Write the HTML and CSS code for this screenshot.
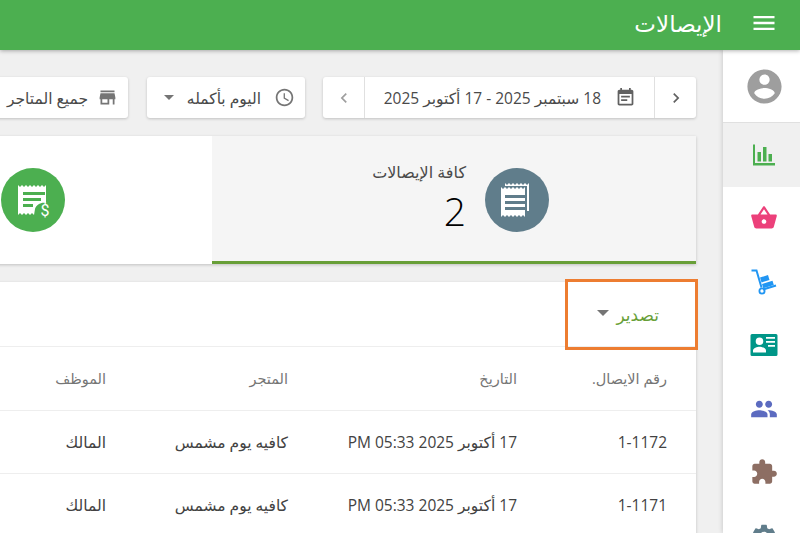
FILE: index.html
```html
<!DOCTYPE html>
<html lang="ar" dir="rtl">
<head>
<meta charset="utf-8">
<title>الإيصالات</title>
<link rel="stylesheet" href="styles.css">
</head>
<body>
<header class="topbar">
  <button class="menu-btn" aria-label="menu"><svg class="ic28" viewBox="0 0 24 24"><path d="M3 18h18v-2H3v2zm0-5h18v-2H3v2zm0-7v2h18V6H3z"/></svg></button>
  <h1 class="title">الإيصالات</h1>
</header>
<div class="shell">
  <aside class="sidebar">
    <div class="side-item side-user"><svg class="avatar" viewBox="0 0 24 24"><path d="M12 2C6.48 2 2 6.48 2 12s4.48 10 10 10 10-4.48 10-10S17.52 2 12 2zm0 3c1.66 0 3 1.34 3 3s-1.34 3-3 3-3-1.34-3-3 1.34-3 3-3zm0 14.2c-2.5 0-4.71-1.28-6-3.22.03-1.99 4-3.08 6-3.08 1.99 0 5.97 1.09 6 3.08-1.29 1.94-3.5 3.22-6 3.22z"/></svg></div>
    <div class="side-item active"><svg class="ic24 c-green" viewBox="0 0 24 24"><path d="M1 1.500h2V20h20v2.500H1zM5.500 9H9v9.500H5.500zM11 4h3.500v14.500H11zM16.500 11H20v7.500h-3.500z"/></svg></div>
    <div class="side-item"><svg class="ic28 c-pink" viewBox="0 0 24 24"><path d="M17.210 9l-4.380-6.560c-.19-.28-.51-.42-.83-.42-.32 0-.64.14-.83.43L6.790 9H2c-.55 0-1 .45-1 1 0 .09.01.18.04.27l2.540 9.270c.23.84 1 1.460 1.920 1.460h13c.92 0 1.690-.62 1.930-1.460l2.540-9.270L23 10c0-.55-.45-1-1-1h-4.790zM9 9l3-4.400L15 9H9zm3 8c-1.100 0-2-.9-2-2s.9-2 2-2 2 .9 2 2-.9 2-2 2z"/></svg></div>
    <div class="side-item"><svg class="ic28 c-blue" viewBox="0 0 28 28"><path d="M1.500 2.500H6.500L11.500 19.500" fill="none" stroke="currentColor" stroke-width="2"/><path d="M13 21.500L26 17.500" fill="none" stroke="currentColor" stroke-width="2"/><circle cx="12" cy="23" r="2.600" fill="none" stroke="currentColor" stroke-width="1.800"/><path d="M10 9.500l8-2.500 1.500 5-8 2.500zM12 16l10.500-3.200 1.300 4.200-10.500 3.200z"/></svg></div>
    <div class="side-item"><svg class="ic28 c-teal" viewBox="0 0 28 24"><path fill-rule="evenodd" d="M2 1h24a1.500 1.500 0 0 1 1.500 1.500v19A1.500 1.500 0 0 1 26 23H2A1.500 1.500 0 0 1 .5 21.500v-19A1.500 1.500 0 0 1 2 1zM9.500 4.500a3.800 3.800 0 1 0 0 7.600 3.800 3.800 0 0 0 0-7.600zM3 19.500h13v-2c0-2.500-4.300-3.800-6.500-3.800S3 15 3 17.500zM16 4v1.800h9V4zM16 8v1.800h9V8zM18 12v1.800h7V12z"/></svg></div>
    <div class="side-item"><svg class="ic28 c-indigo" viewBox="0 0 24 24"><path d="M16 11c1.660 0 2.990-1.340 2.990-3S17.660 5 16 5c-1.660 0-3 1.340-3 3s1.340 3 3 3zm-8 0c1.660 0 2.990-1.340 2.990-3S9.660 5 8 5C6.340 5 5 6.340 5 8s1.340 3 3 3zm0 2c-2.330 0-7 1.170-7 3.500V19h14v-2.500c0-2.330-4.670-3.500-7-3.500zm8 0c-.29 0-.62.02-.97.05 1.160.84 1.970 1.970 1.970 3.450V19h6v-2.500c0-2.330-4.670-3.500-7-3.500z"/></svg></div>
    <div class="side-item"><svg class="ic28 c-brown" viewBox="0 0 24 24"><path d="M20.500 11H19V7c0-1.100-.9-2-2-2h-4V3.500C13 2.120 11.880 1 10.500 1S8 2.120 8 3.500V5H4c-1.100 0-1.990.9-1.990 2v3.800H3.500c1.490 0 2.700 1.210 2.700 2.700s-1.210 2.700-2.700 2.700H2V20c0 1.100.9 2 2 2h3.800v-1.500c0-1.490 1.210-2.700 2.700-2.700 1.490 0 2.700 1.210 2.700 2.700V22H17c1.100 0 2-.9 2-2v-4h1.500c1.380 0 2.500-1.120 2.500-2.500S21.880 11 20.500 11z"/></svg></div>
    <div class="side-item"><svg class="ic28 c-slate" viewBox="0 0 24 24"><path d="M19.140 12.940c.04-.3.06-.61.06-.94 0-.32-.02-.64-.07-.94l2.030-1.580c.18-.14.23-.41.12-.61l-1.920-3.320c-.12-.22-.37-.29-.59-.22l-2.390.96c-.5-.38-1.030-.7-1.620-.94l-.36-2.540c-.04-.24-.24-.41-.48-.41h-3.840c-.24 0-.43.17-.47.41l-.36 2.540c-.59.24-1.130.57-1.620.94l-2.390-.96c-.22-.08-.47 0-.59.22L2.740 8.870c-.12.21-.08.47.12.61l2.030 1.580c-.05.3-.09.63-.09.94s.02.64.07.94l-2.030 1.580c-.18.14-.23.41-.12.61l1.920 3.320c.12.22.37.29.59.22l2.390-.96c.5.38 1.030.7 1.620.94l.36 2.540c.05.24.24.41.48.41h3.840c.24 0 .44-.17.47-.41l.36-2.540c.59-.24 1.130-.56 1.620-.94l2.390.96c.22.08.47 0 .59-.22l1.920-3.320c.12-.22.07-.47-.12-.61l-2.010-1.580zM12 15.600c-1.980 0-3.600-1.620-3.600-3.600s1.620-3.600 3.600-3.600 3.600 1.620 3.600 3.600-1.620 3.600-3.600 3.600z"/></svg></div>
  </aside>
  <main class="content">
    <div class="toolbar">
      <div class="control date-range">
        <button class="nav-btn"><svg class="ic20 c-dark" viewBox="0 0 24 24"><path d="M8.590 16.590L10 18l6-6-6-6-1.410 1.410L13.170 12z"/></svg></button>
        <div class="date-label"><svg class="ic21 c-dark" viewBox="0 0 24 24"><path d="M17 10H7v2h10v-2zm2-7h-1V1h-2v2H8V1H6v2H5c-1.110 0-1.990.9-1.990 2L3 19c0 1.100.89 2 2 2h14c1.100 0 2-.9 2-2V5c0-1.100-.9-2-2-2zm0 16H5V8h14v11zm-5-5H7v2h7v-2z"/></svg><span>18 سبتمبر 2025 - 17 أكتوبر 2025</span></div>
        <button class="nav-btn"><svg class="ic20 c-light" viewBox="0 0 24 24"><path d="M15.410 7.410L14 6l-6 6 6 6 1.410-1.410L10.830 12z"/></svg></button>
      </div>
      <div class="control picker picker-time">
        <svg class="ic21 c-mid" viewBox="0 0 24 24"><path d="M11.990 2C6.470 2 2 6.480 2 12s4.470 10 9.990 10C17.520 22 22 17.520 22 12S17.520 2 11.990 2zM12 20c-4.420 0-8-3.580-8-8s3.580-8 8-8 8 3.580 8 8-3.580 8-8 8zm.5-13H11v6l5.250 3.150.75-1.230-4.500-2.670z"/></svg>
        <span>اليوم بأكمله</span>
        <i class="caret"></i>
      </div>
      <div class="control picker picker-store">
        <svg class="ic21 c-mid" viewBox="0 0 24 24"><path d="M20 4H4v2h16V4zm1 10v-2l-1-5H4l-1 5v2h1v6h10v-6h4v6h2v-6h1zm-9 4H6v-4h6v4z"/></svg>
        <span>جميع المتاجر</span>
      </div>
    </div>

    <section class="stats">
      <div class="stat stat-active">
        <div class="stat-circle bg-slate">
          <svg class="ic-receipt" viewBox="0 0 40 40"><path fill-rule="evenodd" d="M4 7l2 2 2-2 2 2 2-2 2 2 2-2 2 2 2-2 2 2 2-2 2 2 2-2v30l-2-2-2 2-2-2-2 2-2-2-2 2-2-2-2 2-2-2-2 2-2-2-2 2zM8 15v3h20v-3zM8 21v3h20v-3zM8 27v3h20v-3z"/><path d="M8 3l2 2 2-2 2 2 2-2 2 2 2-2 2 2 2-2 2 2 2-2 2 2 2-2v28h-2V6H8z"/></svg>
        </div>
        <div class="stat-text"><div class="stat-label">كافة الإيصالات</div><div class="stat-value">2</div></div>
      </div>
      <div class="stat stat-idle">
        <div class="stat-circle bg-green">
          <svg class="ic-receipt" viewBox="0 0 40 40"><path fill-rule="evenodd" d="M5 5l2 2 2-2 2 2 2-2 2 2 2-2 2 2 2-2 2 2 2-2 2 2 2-2 2 2 2-2v18c-5-1-10 2-11 6l-1 6-2-2-2 2-2-2-2 2-2-2-2 2-2-2-2 2zM10 12v3h22v-3zM10 18v3h18v-3zM10 24v3h10v-3z"/><text x="32" y="36" class="dollar">$</text></svg>
        </div>
      </div>
    </section>

    <section class="table-card">
      <div class="table-top">
        <div class="export"><span class="export-text">تصدير</span><i class="caret"></i></div>
        <div class="highlight"></div>
      </div>
      <table class="receipts">
        <thead>
          <tr><th class="col-no">رقم الايصال.</th><th class="col-date">التاريخ</th><th class="col-store">المتجر</th><th class="col-staff">الموظف</th></tr>
        </thead>
        <tbody>
          <tr><td>1-1172</td><td>17 أكتوبر <bdi>2025</bdi> <bdi>05:33</bdi> <bdi>PM</bdi></td><td>كافيه يوم مشمس</td><td>المالك</td></tr>
          <tr><td>1-1171</td><td>17 أكتوبر <bdi>2025</bdi> <bdi>05:33</bdi> <bdi>PM</bdi></td><td>كافيه يوم مشمس</td><td>المالك</td></tr>
        </tbody>
      </table>
    </section>
  </main>
</div>
</body>
</html>
```
FILE: styles.css
```css
* { box-sizing: border-box; }
html, body { margin: 0; height: 100%; overflow: hidden; }
body {
  width: 800px;
  height: 533px;
  background: #f0f0f0;
  color: #333;
  font-family: "Open Sans", "DejaVu Sans", "Noto Sans", sans-serif;
  font-size: 15.5px;
  display: flex;
  flex-direction: column;
}
svg { display: block; fill: currentColor; flex: none; }
button { border: 0; background: none; padding: 0; font: inherit; }

.ic20 { width: 20px; height: 20px; }
.ic21 { width: 21px; height: 21px; }
.ic24 { width: 24px; height: 24px; }
.ic28 { width: 28px; height: 28px; }
.c-green { color: #4caf50; }
.c-pink { color: #ec407a; }
.c-blue { color: #2196f3; }
.c-teal { color: #009688; }
.c-indigo { color: #5c6bc0; }
.c-brown { color: #8d6e63; }
.c-slate { color: #607d8b; }
.c-dark { color: #616161; }
.c-mid { color: #757575; }
.c-light { color: #9e9e9e; }

.topbar {
  flex: none;
  height: 50px;
  background: #4caf50;
  color: #fff;
  display: flex;
  align-items: center;
  padding-right: 22px;
  gap: 28px;
  box-shadow: 0 1px 4px rgba(0,0,0,.3);
  position: relative;
  z-index: 3;
}
.menu-btn { color: #fff; width: 28px; height: 28px; margin-top: -5px; }
.title { margin: 0; font-size: 23px; font-weight: 400; line-height: 1; margin-top: -3px; }

.shell { flex: 1; min-height: 0; display: flex; }

.sidebar {
  flex: none;
  width: 77px;
  background: #fff;
  box-shadow: 0 0 5px rgba(0,0,0,.2);
  position: relative;
  z-index: 2;
}
.side-item { height: 63.5px; padding-right: 0; padding-left: 5px; display: flex; align-items: center; justify-content: center; }
.side-user { height: 73px; border-bottom: 1px solid #e0e0e0; }
.avatar { width: 41px; height: 41px; color: #9e9e9e; }
.active { background: #f0f0f0; }

.content { flex: 1; min-width: 0; overflow: hidden; padding: 27px 27px 0 0; }

.toolbar { display: flex; gap: 18px; height: 41px; }
.control {
  flex: none;
  height: 41px;
  background: #fff;
  border-radius: 3px;
  box-shadow: 0 1px 3px rgba(0,0,0,.2);
  display: flex;
  align-items: center;
  color: #4a4a4a;
}
.date-range { width: 373px; }
.nav-btn { width: 41px; height: 41px; display: flex; align-items: center; justify-content: center; }
.nav-btn:first-child { border-left: 1px solid #e0e0e0; width: 42px; }
.nav-btn:last-child { border-right: 1px solid #e0e0e0; width: 42px; }
.date-label { flex: 1; display: flex; align-items: center; gap: 14px; padding-right: 18px; white-space: nowrap; }
.picker { padding: 0 10px; gap: 13px; white-space: nowrap; }
.picker-time { width: 158px; }
.picker-store { width: 147px; margin-right: 1px; gap: 9px; }
.caret {
  display: inline-block;
  width: 0;
  height: 0;
  border-left: 5px solid transparent;
  border-right: 5px solid transparent;
  border-top: 5px solid #757575;
  flex: none;
}

.stats {
  margin-top: 18px;
  width: 760px;
  height: 128px;
  display: flex;
  background: #fff;
  box-shadow: 0 1px 3px rgba(0,0,0,.2);
}
.stat { height: 128px; display: flex; align-items: center; flex: none; }
.stat-active { width: 484px; background: #f5f5f5; border-bottom: 3px solid #689f38; padding: 3px 147px 0 0; gap: 19px; }
.stat-idle { width: 276px; padding-right: 147px; }
.stat-circle { width: 64px; height: 64px; border-radius: 50%; display: flex; align-items: center; justify-content: center; color: #fff; flex: none; }
.bg-slate { background: #607d8b; }
.bg-green { background: #4caf50; }
.ic-receipt { width: 40px; height: 40px; }
.dollar { font-family: Roboto, sans-serif; font-size: 16px; fill: #fff; text-anchor: middle; }
.stat-text { margin-bottom: 4px; }
.stat-label { color: #4a4a4a; font-size: 16px; line-height: 18px; }
.stat-value { font-size: 39px; font-weight: 300; line-height: 44px; color: #000; margin-top: 8px; }

.table-card {
  margin-top: 18px;
  width: 760px;
  background: #fff;
  box-shadow: 0 1px 3px rgba(0,0,0,.2);
}
.table-top { height: 65px; position: relative; border-bottom: 1px solid #eeeeee; display: flex; align-items: center; }
.export { display: flex; align-items: center; gap: 7px; padding-right: 37px; color: #689f38; font-size: 17px; }
.export .caret { margin-top: -3px; border-left-width: 6px; border-right-width: 6px; border-top-width: 6px; }
.highlight { position: absolute; top: -3px; right: -2px; width: 133px; height: 71px; border: 3px solid #ed7d31; }

.receipts { border-collapse: collapse; table-layout: fixed; width: 760px; }
.receipts th, .receipts td { text-align: right; padding: 0 29px; white-space: nowrap; }
.receipts th { height: 63px; font-weight: 400; color: #757575; font-size: 14.5px; }
.receipts td { height: 63px; border-top: 1px solid #eeeeee; color: #424242; font-size: 15.5px; }
.col-no { width: 150px; }
.col-date { width: 229px; }
.col-store { width: 182px; }
```
